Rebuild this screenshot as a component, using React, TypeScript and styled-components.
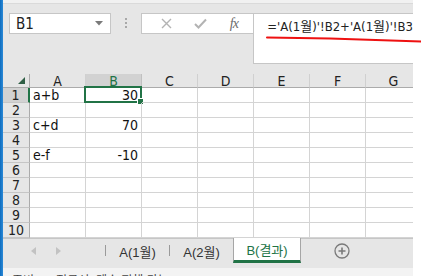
import React from "react";
import styled, { createGlobalStyle } from "styled-components";

const GlobalStyle = createGlobalStyle`
  html, body {
    margin: 0;
    padding: 0;
    background: #ffffff;
  }
  body {
    font-family: "Liberation Sans", "Noto Sans CJK KR", sans-serif;
  }
`

const NARROW = `"DejaVu Sans Condensed", "Liberation Sans Narrow", "Liberation Sans", "Noto Sans CJK KR", sans-serif`

const Window = styled.div`
  position: relative;
  display: flex;
  width: 421px;
  height: 276px;
  overflow: hidden;
  background: #ffffff;
`

const EdgeStrip = styled.div`
  width: 3px;
  flex: none;
  background: linear-gradient(to right, #0f6cbd, #2b8ad8);
`

const Main = styled.div`
  width: 410px;
  flex: none;
  display: flex;
  flex-direction: column;
  background: #e6e6e6;
  overflow: hidden;

  & > * {
    flex-shrink: 0;
  }
`

const TopBand = styled.div`
  height: 3px;
  background: #f1f1f1;
  border-bottom: 1px solid #dadada;
`

const FormulaRow = styled.div`
  display: flex;
  align-items: flex-start;
  height: 70px;
  padding: 9px 0 0 6px;
  box-sizing: border-box;
`

const NameBox = styled.div`
  display: flex;
  align-items: center;
  justify-content: space-between;
  width: 102px;
  height: 21px;
  box-sizing: border-box;
  border: 1px solid #c6c6c6;
  background: #fff;
  padding: 0 7px 0 6px;
  font-family: ${NARROW};
  font-stretch: condensed;
  font-size: 15px;
  color: #222;
`

const Dots = styled.div`
  display: flex;
  flex-direction: column;
  gap: 2px;
  width: 30px;
  align-items: center;
  padding-top: 5px;

  span {
    width: 2px;
    height: 2px;
    background: #a8a8a8;
  }
`

const ButtonBox = styled.div`
  display: flex;
  align-items: center;
  justify-content: space-around;
  width: 113px;
  height: 21px;
  box-sizing: border-box;
  border: 1px solid #c6c6c6;
  border-right: none;
  background: #fff;
  padding: 0 4px 0 8px;
`

const Fx = styled.span`
  font-family: "Liberation Serif", serif;
  font-style: italic;
  font-size: 14px;
  color: #6c6c6c;
  letter-spacing: -1px;
`

const FormulaBox = styled.div`
  flex: 1;
  height: 51px;
  box-sizing: border-box;
  border: 1px solid #c6c6c6;
  border-right: none;
  background: #fff;
  padding: 2px 0 0 13px;
  font-family: ${NARROW};
  font-stretch: condensed;
  font-size: 13px;
  color: #222;
  white-space: nowrap;
`

const Grid = styled.div`
  display: grid;
  grid-template-columns: 27px repeat(7, 56px);
  grid-template-rows: 14px repeat(10, 15px);
  background: #fff;
  font-family: ${NARROW};
  font-stretch: condensed;
`

const Corner = styled.div`
  background: #e6e6e6;
  border-right: 1px solid #ababab;
  border-bottom: 1px solid #ababab;
  display: flex;
  align-items: flex-end;
  justify-content: flex-end;
  padding: 0 4px 3px 0;
`

const ColHead = styled.div<{ $active?: boolean }>`
  display: flex;
  align-items: center;
  justify-content: center;
  background: ${(p) => (p.$active ? "#d2d2d2" : "#e6e6e6")};
  color: ${(p) => (p.$active ? "#217346" : "#222")};
  border-right: 1px solid ${(p) => (p.$active ? "#c0c0c0" : "#d0d0d0")};
  border-bottom: 1px solid #ababab;
  font-size: 14px;
  line-height: 1;
`

const RowHead = styled.div<{ $active?: boolean }>`
  display: flex;
  align-items: center;
  justify-content: center;
  background: ${(p) => (p.$active ? "#d2d2d2" : "#e6e6e6")};
  border-right: ${(p) => (p.$active ? "2px solid #217346" : "1px solid #ababab")};
  border-bottom: 1px solid #c6c6c6;
  font-size: 14px;
  line-height: 1;
  color: #222;
`

const Cell = styled.div<{ $num?: boolean }>`
  position: relative;
  display: flex;
  align-items: center;
  justify-content: ${(p) => (p.$num ? "flex-end" : "flex-start")};
  padding: 0 3px;
  border-right: 1px solid #d4d4d4;
  border-bottom: 1px solid #d4d4d4;
  font-size: 14px;
  line-height: 1;
  color: #111;
  white-space: nowrap;
`

const Selection = styled.div`
  position: absolute;
  left: -2px;
  top: -2px;
  right: -1px;
  bottom: -1px;
  border: 2px solid #217346;
  pointer-events: none;
`

const FillHandle = styled.div`
  position: absolute;
  right: -4px;
  bottom: -4px;
  width: 5px;
  height: 5px;
  background: #217346;
  border: 1px solid #fff;
`

const TabBar = styled.div`
  display: flex;
  align-items: stretch;
  height: 30px;
  box-sizing: border-box;
  border-top: 1px solid #c6c6c6;
  font-family: "Liberation Sans", "Noto Sans CJK KR", sans-serif;
  font-size: 13px;
`

const NavArrows = styled.div`
  display: flex;
  align-items: center;
  gap: 20px;
  width: 102px;
  padding-left: 28px;
  box-sizing: border-box;
  margin-bottom: 6px;
`

const Tab = styled.div<{ $active?: boolean }>`
  display: flex;
  align-items: center;
  justify-content: center;
  width: ${(p) => (p.$active ? "68px" : "63px")};
  box-sizing: border-box;
  color: ${(p) => (p.$active ? "#217346" : "#333")};
  background: ${(p) => (p.$active ? "#fff" : "transparent")};
  margin-top: ${(p) => (p.$active ? "-1px" : "0")};
  margin-bottom: 5px;
  border-left: 1px solid ${(p) => (p.$active ? "#a6a6a6" : "transparent")};
  border-right: 1px solid ${(p) => (p.$active ? "#a6a6a6" : "transparent")};
  border-bottom: ${(p) => (p.$active ? "3px solid #217346" : "none")};
`

const TabDivider = styled.div`
  width: 1px;
  background: #9a9a9a;
  margin: 6px 0 12px;
`

const AddTab = styled.div`
  display: flex;
  align-items: center;
  justify-content: center;
  width: 82px;
  margin-bottom: 6px;
`

const StatusBar = styled.div`
  height: 20px;
  background: #f3f3f3;
  display: flex;
  gap: 22px;
  padding: 3px 0 0 9px;
  font-family: "Liberation Sans", "Noto Sans CJK KR", sans-serif;
  font-size: 12px;
  color: #444;
  white-space: nowrap;
`

const RightEdge = styled.div`
  flex: 1;
  background: #fff;
`

const Annotation = styled.svg`
  position: absolute;
  left: 0;
  top: 0;
  pointer-events: none;
`

const cols = ["A", "B", "C", "D", "E", "F", "G"]

const data: Record<number, [string, string]> = {
  1: ["a+b", "30"],
  3: ["c+d", "70"],
  5: ["e-f", "-10"],
}

const App = () => {
  const rows = Array.from({ length: 10 }, (_, i) => i + 1)

  return (
    <>
      <GlobalStyle />
      <Window>
        <EdgeStrip />
        <Main>
          <TopBand />
          {/* 이름 상자 / 수식 입력줄 */}
          <FormulaRow>
            <NameBox>
              <span>B1</span>
              <svg width="8" height="5" viewBox="0 0 8 5">
                <path d="M0 0 H8 L4 4.5 Z" fill="#7a7a7a" />
              </svg>
            </NameBox>
            <Dots>
              <span />
              <span />
              <span />
            </Dots>
            <ButtonBox>
              <svg width="11" height="11" viewBox="0 0 11 11">
                <path d="M1 1 L10 10 M10 1 L1 10" stroke="#b3b3b3" strokeWidth="1.4" />
              </svg>
              <svg width="13" height="11" viewBox="0 0 13 11">
                <path d="M1 6 L4.5 9.5 L12 1.5" stroke="#b3b3b3" strokeWidth="2" fill="none" />
              </svg>
              <Fx>fx</Fx>
            </ButtonBox>
            <FormulaBox>='A(1월)'!B2+'A(1월)'!B3</FormulaBox>
          </FormulaRow>

          {/* 시트 */}
          <Grid>
            <Corner>
              <svg width="7" height="7" viewBox="0 0 7 7">
                <path d="M7 0 V7 H0 Z" fill="#2f5e45" />
              </svg>
            </Corner>
            {cols.map((c) => (
              <ColHead key={c} $active={c === "B"}>{c}</ColHead>
            ))}
            {rows.map((r) => (
              <React.Fragment key={r}>
                <RowHead $active={r === 1}>{r}</RowHead>
                {cols.map((c, ci) => (
                  <Cell key={c} $num={ci === 1}>
                    {data[r] && ci < 2 ? data[r][ci] : ""}
                    {r === 1 && c === "B" && (
                      <Selection>
                        <FillHandle />
                      </Selection>
                    )}
                  </Cell>
                ))}
              </React.Fragment>
            ))}
          </Grid>

          {/* 시트 탭 */}
          <TabBar>
            <NavArrows>
              <svg width="5" height="8" viewBox="0 0 5 8">
                <path d="M5 0 V8 L0 4 Z" fill="#c2c2c2" />
              </svg>
              <svg width="5" height="8" viewBox="0 0 5 8">
                <path d="M0 0 V8 L5 4 Z" fill="#c2c2c2" />
              </svg>
            </NavArrows>
            <TabDivider />
            <Tab>A(1월)</Tab>
            <TabDivider />
            <Tab>A(2월)</Tab>
            <Tab $active>B(결과)</Tab>
            <AddTab>
              <svg width="16" height="16" viewBox="0 0 16 16">
                <circle cx="8" cy="8" r="7" fill="none" stroke="#7a7a7a" strokeWidth="1.3" />
                <path d="M8 4.5 V11.5 M4.5 8 H11.5" stroke="#7a7a7a" strokeWidth="1.6" />
              </svg>
            </AddTab>
          </TabBar>

          <StatusBar>
            <span>준비</span>
            <span>접근성: 계속 진행 가능</span>
          </StatusBar>
        </Main>
        <RightEdge />

        <Annotation width="421" height="276" viewBox="0 0 421 276">
          <path
            d="M267 37.6 C290 37.8 310 38.2 330 38.6 C360 39.4 390 40.6 421 41.6"
            stroke="#ee1111"
            strokeWidth="2"
            fill="none"
            strokeLinecap="round"
          />
        </Annotation>
      </Window>
    </>
  )
}

export default App
